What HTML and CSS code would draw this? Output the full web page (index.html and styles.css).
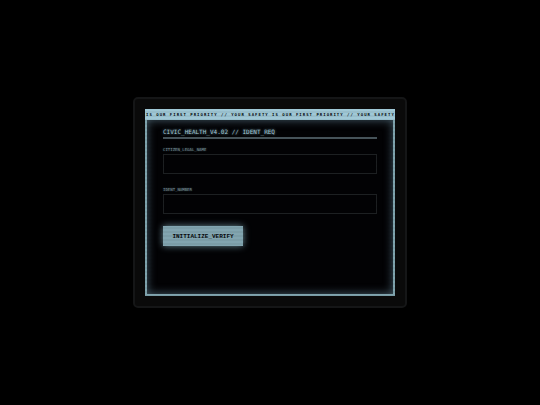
FILE: index.html
```html
<!DOCTYPE html>
<html lang="en">
<head>
    <meta charset="UTF-8">
    <title>Civic Health</title>
    <meta name="viewport" content="width=device-width, initial-scale=1.0">
    <link rel="stylesheet" href="styles.css">
</head>
<body>
    <main class="bezel">
        <div class="screen">
            <div class="ticker">IS OUR FIRST PRIORITY // YOUR SAFETY IS OUR FIRST PRIORITY // YOUR SAFETY</div>
            <form class="panel">
                <h1>CIVIC_HEALTH_V4.02 // IDENT_REQ</h1>
                <div class="field">
                    <label for="legalName">CITIZEN_LEGAL_NAME</label>
                    <input type="text" id="legalName" autocomplete="off">
                </div>
                <div class="field">
                    <label for="identNumber">IDENT_NUMBER</label>
                    <input type="text" id="identNumber" autocomplete="off">
                </div>
                <button type="button">INITIALIZE_VERIFY</button>
            </form>
        </div>
    </main>
</body>
</html>
```

FILE: styles.css
```css
* {
    box-sizing: border-box;
}
body {
    margin: 0;
    min-height: 100vh;
    display: flex;
    align-items: center;
    justify-content: center;
    background: #000;
    font-family: "DejaVu Sans Mono", "Liberation Mono", monospace;
}
.bezel {
    width: 100%;
    max-width: 274px;
    padding: 10px;
    background: #0a0a0a;
    border: 2px solid #151617;
    border-radius: 5px;
}
.screen {
    position: relative;
    background: #020204;
}
/* scanlines */
.screen::after {
    content: "";
    position: absolute;
    inset: 0;
    pointer-events: none;
    background: repeating-linear-gradient(rgba(0, 0, 0, 0) 0 2px, rgba(0, 0, 0, 0.05) 2px 4px);
}
.ticker {
    padding-left: 1px;
    background: #a0c8d6;
    color: #05090c;
    font-size: 4px;
    font-weight: bold;
    letter-spacing: 1px;
    line-height: 11px;
    white-space: nowrap;
}
.panel {
    padding: 7px 16px 48px;
    border: 2px solid #80a4ae;
    border-top: none;
    box-shadow: inset 0 0 10px rgba(140, 185, 210, 0.5);
}
h1 {
    margin: 0 0 7px;
    padding-bottom: 1px;
    border-bottom: 2px solid #465359;
    color: #a3c9d7;
    font-size: 6px;
    font-weight: normal;
    line-height: 9px;
    text-shadow: 0 0 3px #7fa6b4;
}
.field {
    margin-bottom: 12px;
}
label {
    display: block;
    margin-bottom: 1px;
    color: #7b929b;
    font-size: 4px;
    line-height: 7px;
    text-shadow: 0 0 2px #4a616a;
}
input {
    display: block;
    width: 100%;
    height: 20px;
    padding: 0 6px;
    background: #020204;
    border: 1px solid #1d2022;
    color: #8fb2be;
    font: inherit;
    font-size: 6px;
    outline: none;
}
button {
    display: block;
    width: 80px;
    height: 20px;
    padding: 0;
    background: #82a5b0;
    border: none;
    box-shadow: 0 0 7px rgba(130, 170, 185, 0.8);
    color: #05080a;
    font-family: "Liberation Mono", monospace;
    font-size: 6px;
    font-weight: bold;
    cursor: pointer;
}
```
